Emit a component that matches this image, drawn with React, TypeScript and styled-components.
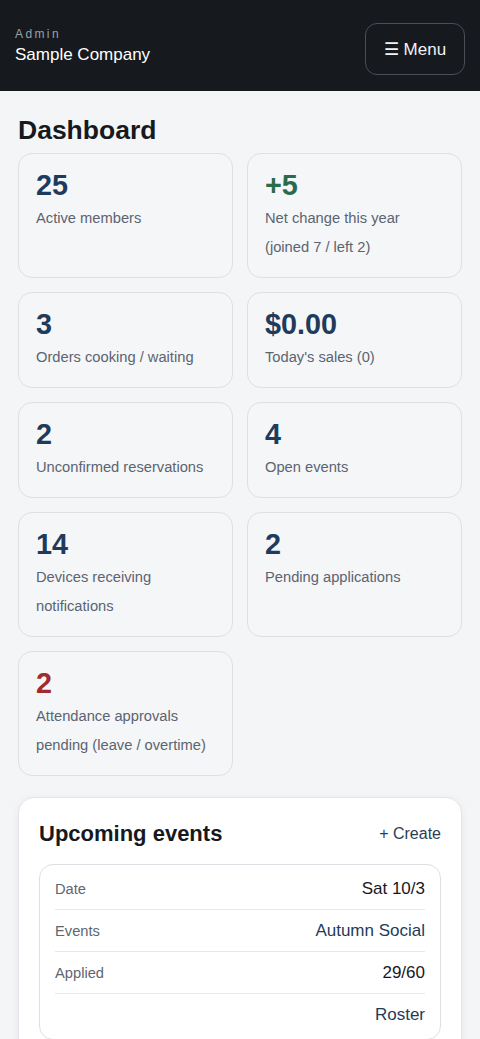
import styled, { createGlobalStyle } from "styled-components";

const GlobalStyle = createGlobalStyle`
  * {
    box-sizing: border-box;
  }

  body {
    margin: 0;
    background: #f4f5f7;
    font-family: "Liberation Sans", Arial, sans-serif;
    color: #16191e;
  }
`;

type Tone = "blue" | "green" | "red";

const stats: { value: string; label: string; tone: Tone }[] = [
  { value: "25", label: "Active members", tone: "blue" },
  { value: "+5", label: "Net change this year (joined 7 / left 2)", tone: "green" },
  { value: "3", label: "Orders cooking / waiting", tone: "blue" },
  { value: "$0.00", label: "Today's sales (0)", tone: "blue" },
  { value: "2", label: "Unconfirmed reservations", tone: "blue" },
  { value: "4", label: "Open events", tone: "blue" },
  { value: "14", label: "Devices receiving notifications", tone: "blue" },
  { value: "2", label: "Pending applications", tone: "blue" },
  { value: "2", label: "Attendance approvals pending (leave / overtime)", tone: "red" },
];

const toneColors: Record<Tone, string> = {
  blue: "#1f3b5c",
  green: "#2a6b4b",
  red: "#a22b2b",
};

const eventRows = [
  { label: "Date", value: "Sat 10/3", link: false },
  { label: "Events", value: "Autumn Social", link: true },
  { label: "Applied", value: "29/60", link: false },
  { label: "", value: "Roster", link: true },
];

function App() {
  return (
    <>
      <GlobalStyle />
      <TopBar>
        <Brand>
          <BrandRole>Admin</BrandRole>
          <BrandName>Sample Company</BrandName>
        </Brand>
        <MenuButton>☰ Menu</MenuButton>
      </TopBar>

      <Main>
        <Title>Dashboard</Title>
        <StatGrid>
          {stats.map((stat, i) => (
            <StatCard key={i}>
              <StatValue $tone={stat.tone}>{stat.value}</StatValue>
              <StatLabel>{stat.label}</StatLabel>
            </StatCard>
          ))}
        </StatGrid>

        <Panel>
          <PanelHeader>
            <PanelTitle>Upcoming events</PanelTitle>
            <CreateLink>+ Create</CreateLink>
          </PanelHeader>
          <EventBox>
            {eventRows.map((row, i) => (
              <EventRow key={i}>
                <EventLabel>{row.label}</EventLabel>
                <EventValue $link={row.link}>{row.value}</EventValue>
              </EventRow>
            ))}
          </EventBox>
        </Panel>
      </Main>
    </>
  );
}

export default App;

const TopBar = styled.header`
  display: flex;
  justify-content: space-between;
  align-items: flex-start;
  height: 91px;
  padding: 23px 15px 16px;
  background: #16191e;
`;

const Brand = styled.div`
  display: flex;
  flex-direction: column;
  margin-top: 3px;
`;

const BrandRole = styled.span`
  font-size: 12px;
  line-height: 16px;
  letter-spacing: 2.4px;
  color: #9ba1a9;
`;

const BrandName = styled.span`
  margin-top: 2px;
  font-size: 17px;
  line-height: 22px;
  color: #ffffff;
`;

const MenuButton = styled.button`
  height: 52px;
  width: 100px;
  padding: 0;
  border: 1px solid #4a4f57;
  border-radius: 12px;
  background: transparent;
  color: #f1f2f4;
  font-family: "Liberation Sans", Arial, sans-serif;
  font-size: 17px;
`;

const Main = styled.main`
  padding: 0 18px;
`;

const Title = styled.h1`
  margin: 24px 0 7px;
  font-size: 26.5px;
  line-height: 31px;
  font-weight: 700;
  color: #16191e;
`;

const StatGrid = styled.div`
  display: grid;
  grid-template-columns: 1fr 1fr;
  gap: 14px;
`;

const StatCard = styled.div`
  display: flex;
  flex-direction: column;
  padding: 15px 17px 15px;
  border: 1px solid #dde0e4;
  border-radius: 14px;
  background: #f5f6f8;
`;

const StatValue = styled.div<{ $tone: Tone }>`
  font-size: 28.8px;
  line-height: 32px;
  font-weight: 700;
  color: ${(p) => toneColors[p.$tone]};
`;

const StatLabel = styled.div`
  margin-top: 3px;
  font-size: 14.7px;
  line-height: 29px;
  color: #5b6470;
`;

const Panel = styled.section`
  margin-top: 21px;
  padding: 23px 20px 20px;
  border: 1px solid #e2e5e9;
  border-radius: 16px;
  background: #ffffff;
  box-shadow: 0 2px 10px rgba(20, 25, 35, 0.06);
`;

const PanelHeader = styled.div`
  display: flex;
  justify-content: space-between;
  align-items: center;
  margin-bottom: 17px;
`;

const PanelTitle = styled.h2`
  margin: 0;
  font-size: 22px;
  line-height: 26px;
  font-weight: 700;
  color: #16191e;
`;

const CreateLink = styled.span`
  font-size: 16px;
  color: #2c3e52;
`;

const EventBox = styled.div`
  padding: 3px 15px;
  border: 1px solid #dcdfe3;
  border-radius: 14px;
`;

const EventRow = styled.div`
  display: flex;
  justify-content: space-between;
  align-items: center;
  height: 42px;
  border-bottom: 1px solid #e6e8eb;

  &:last-child {
    border-bottom: none;
  }
`;

const EventLabel = styled.span`
  font-size: 14.7px;
  color: #5f6670;
`;

const EventValue = styled.span<{ $link: boolean }>`
  font-size: 17px;
  color: ${(p) => (p.$link ? "#1f3b5c" : "#16191e")};
`;
